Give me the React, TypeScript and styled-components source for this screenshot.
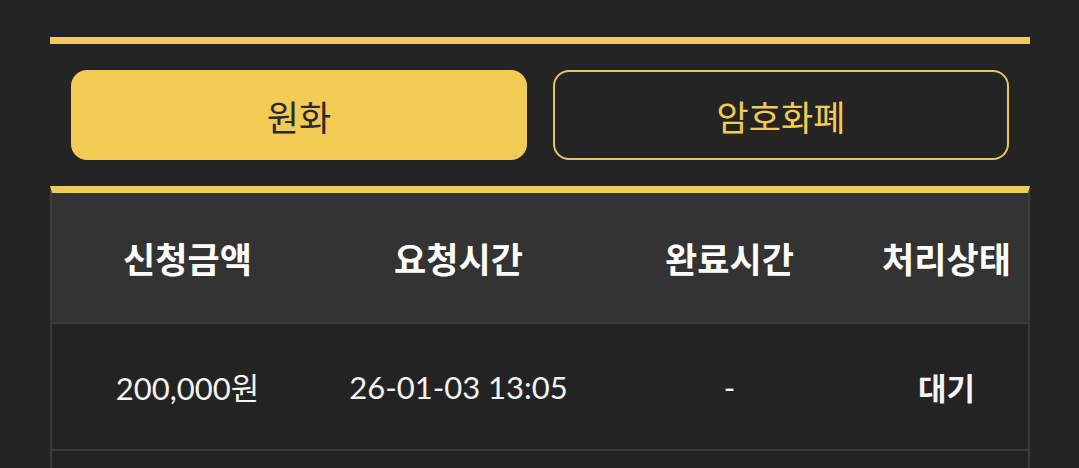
import React, { useState } from "react";
import styled, { createGlobalStyle } from "styled-components";

const GlobalStyle = createGlobalStyle`
  html, body {
    margin: 0;
    padding: 0;
    background: #242424;
  }
  body {
    font-family: Lato, "Noto Sans CJK KR", sans-serif;
    color: #ffffff;
  }
`;

const Page = styled.div`
  padding: 37px 49px 0 50px;
  height: 468px;
  box-sizing: border-box;
  overflow: hidden;
`;

const TabBar = styled.div`
  border-top: 7px solid #f2cb55;
  padding: 26px 21px 26px 21px;
  display: grid;
  grid-template-columns: 1fr 1fr;
  gap: 26px;
`;

const TabButton = styled.button<{ $active: boolean }>`
  height: 90px;
  border-radius: 16px;
  box-sizing: border-box;
  border: 2px solid ${(p) => (p.$active ? "#f2cb55" : "#e6c565")};
  background: ${(p) => (p.$active ? "#f2cb55" : "transparent")};
  color: ${(p) => (p.$active ? "#2a2a2a" : "#f2cb55")};
  font-family: "Noto Sans CJK KR", sans-serif;
  font-size: 35px;
  font-weight: 400;
  cursor: pointer;
  padding: 0;
`;

const Table = styled.div`
  border-top: 7px solid #f2cb55;
  border-left: 2px solid #3a3a3a;
  border-right: 2px solid #3a3a3a;
`;

const Row = styled.div<{ $head?: boolean; $h: number }>`
  display: grid;
  grid-template-columns: 271px 271px 271px 1fr;
  align-items: center;
  height: ${(p) => p.$h}px;
  background: ${(p) => (p.$head ? "#333333" : "#232323")};
  border-bottom: 2px solid #3a3a3a;
`;

const HeadCell = styled.div`
  text-align: center;
  font-family: "Noto Sans CJK KR", sans-serif;
  font-weight: 700;
  font-size: 35px;
  color: #ffffff;
`;

const Cell = styled.div<{ $bold?: boolean }>`
  text-align: center;
  font-family: ${(p) => (p.$bold ? `"Noto Sans CJK KR", sans-serif` : `Lato, "Noto Sans CJK KR", sans-serif`)};
  font-weight: ${(p) => (p.$bold ? 700 : 400)};
  font-size: 31px;
  color: #f4f4f4;
`;

export default function App() {
  const [tab, setTab] = useState(0);
  return (
    <>
      <GlobalStyle />
      <Page>
        <TabBar>
          <TabButton $active={tab === 0} onClick={() => setTab(0)}>
            원화
          </TabButton>
          <TabButton $active={tab === 1} onClick={() => setTab(1)}>
            암호화폐
          </TabButton>
        </TabBar>
        <Table>
          <Row $head $h={129}>
            <HeadCell>신청금액</HeadCell>
            <HeadCell>요청시간</HeadCell>
            <HeadCell>완료시간</HeadCell>
            <HeadCell>처리상태</HeadCell>
          </Row>
          <Row $h={125}>
            <Cell>200,000원</Cell>
            <Cell>26-01-03 13:05</Cell>
            <Cell>-</Cell>
            <Cell $bold>대기</Cell>
          </Row>
          <Row $h={125}>
            <Cell />
            <Cell />
            <Cell />
            <Cell />
          </Row>
        </Table>
      </Page>
    </>
  );
}
